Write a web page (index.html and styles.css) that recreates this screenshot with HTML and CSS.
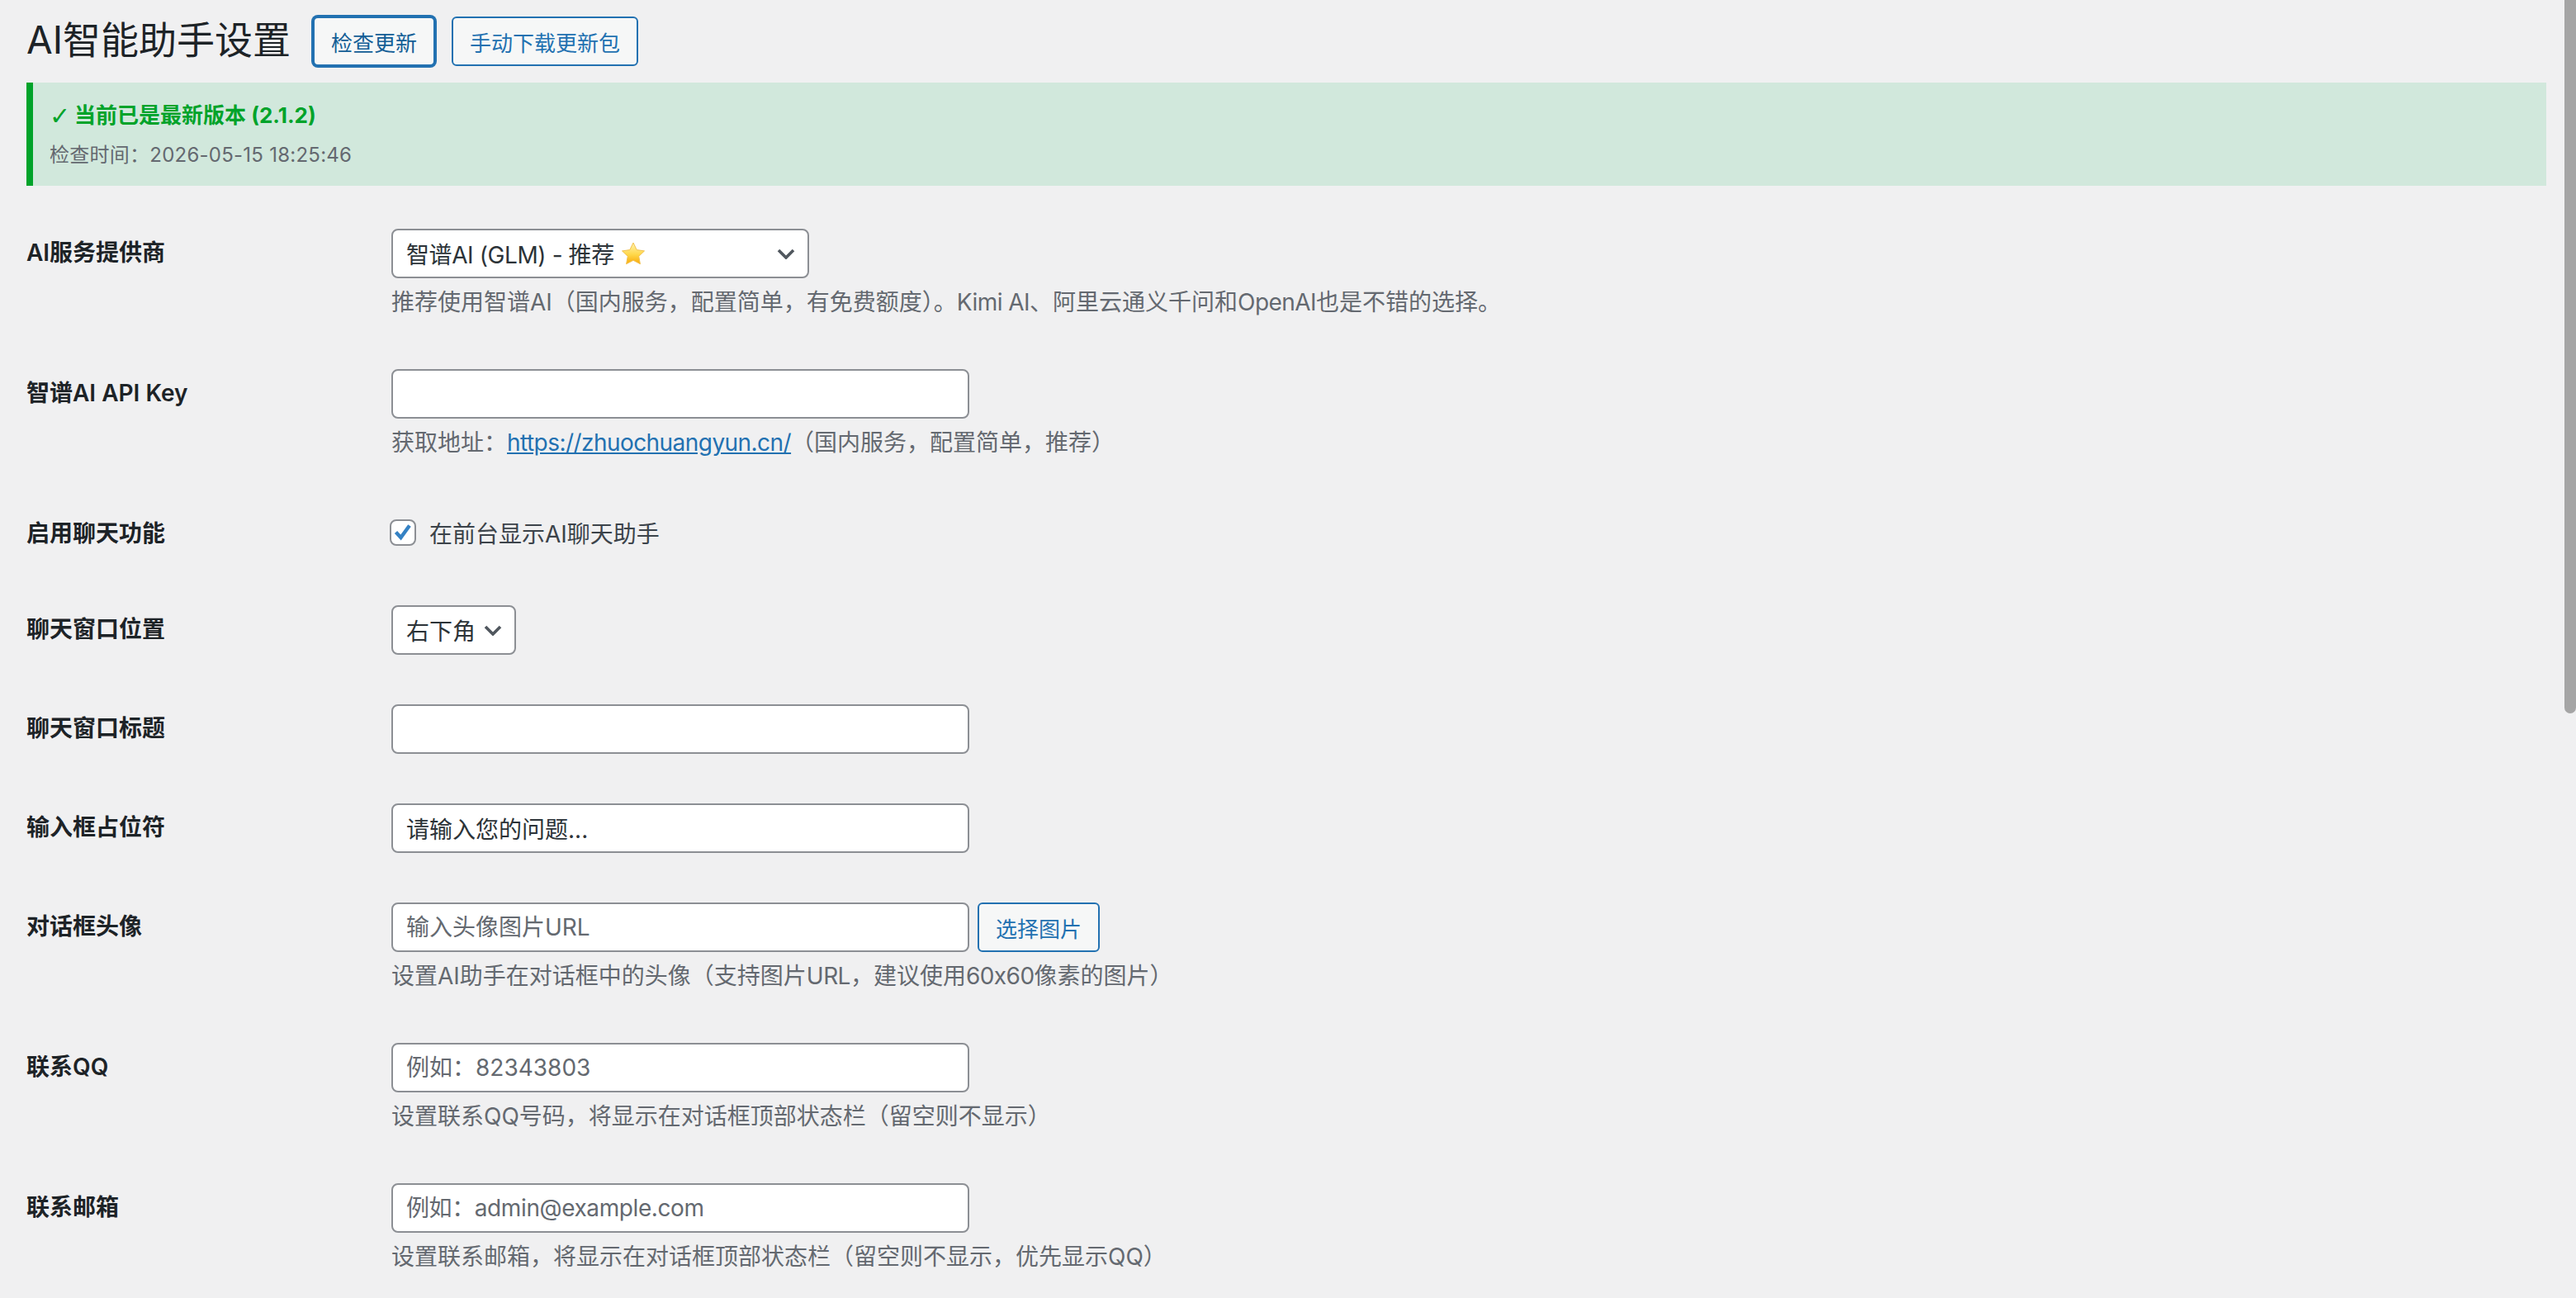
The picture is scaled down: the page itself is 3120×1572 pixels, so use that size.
FILE: index.html
```html
<!DOCTYPE html>
<html lang="zh-CN">
<head>
    <meta charset="UTF-8">
    <title>AI智能助手设置</title>
    <link rel="stylesheet" href="styles.css">
</head>
<body>
    <div class="wrap">
        <div class="page-header">
            <h1>AI智能助手设置</h1>
            <button class="button button-focus" type="button">检查更新</button>
            <button class="button" type="button">手动下载更新包</button>
        </div>

        <div class="notice">
            <p class="notice-title"><span class="tick">✓</span>当前已是最新版本 (2.1.2)</p>
            <p class="notice-time">检查时间：2026-05-15 18:25:46</p>
        </div>

        <table class="form-table">
            <tr>
                <th>AI服务提供商</th>
                <td>
                    <div class="select select-wide">
                        <span class="select-text">智谱AI (GLM) - 推荐</span>
                        <svg class="star" viewBox="0 0 30 28">
                            <defs>
                                <linearGradient id="star-fill" x1="0" y1="0" x2="0" y2="1">
                                    <stop offset="0" stop-color="#fff3b0"/>
                                    <stop offset="0.55" stop-color="#ffd84a"/>
                                    <stop offset="1" stop-color="#f9a908"/>
                                </linearGradient>
                            </defs>
                            <path d="M15 1l4.2 8.6 9.3 1.3-6.8 6.5 1.7 9.3L15 22.3l-8.4 4.4 1.7-9.3-6.8-6.5 9.3-1.3z" fill="url(#star-fill)" stroke="#f2c14e" stroke-width="1" stroke-linejoin="round"/>
                        </svg>
                        <svg class="chevron" viewBox="0 0 22 13"><path d="M2 2l9 9 9-9" fill="none" stroke="#50575e" stroke-width="3.6"/></svg>
                    </div>
                    <p class="description">推荐使用智谱AI（国内服务，配置简单，有免费额度）。<span class="latin">Kimi AI</span>、阿里云通义千问和<span class="latin">OpenAI</span>也是不错的选择。</p>
                </td>
            </tr>
            <tr>
                <th>智谱AI API Key</th>
                <td>
                    <input class="text-input" type="text">
                    <p class="description">获取地址：<a class="latin" href="#">https://zhuochuangyun.cn/</a>（国内服务，配置简单，推荐）</p>
                </td>
            </tr>
            <tr>
                <th>启用聊天功能</th>
                <td>
                    <label class="check-label">
                        <span class="checkbox">
                            <svg viewBox="0 0 32 32"><path d="M7.5 15.5l6 6.5L24 7.5" fill="none" stroke="#3582c4" stroke-width="4.4"/></svg>
                        </span>
                        在前台显示AI聊天助手
                    </label>
                </td>
            </tr>
            <tr>
                <th>聊天窗口位置</th>
                <td>
                    <div class="select select-small">
                        <span>右下角</span>
                        <svg class="chevron" viewBox="0 0 22 13"><path d="M2 2l9 9 9-9" fill="none" stroke="#50575e" stroke-width="3.6"/></svg>
                    </div>
                </td>
            </tr>
            <tr>
                <th>聊天窗口标题</th>
                <td><input class="text-input" type="text"></td>
            </tr>
            <tr>
                <th>输入框占位符</th>
                <td><input class="text-input" type="text" value="请输入您的问题..."></td>
            </tr>
            <tr>
                <th>对话框头像</th>
                <td>
                    <div class="input-row">
                        <input class="text-input" type="text" placeholder="输入头像图片URL">
                        <button class="button" type="button">选择图片</button>
                    </div>
                    <p class="description">设置AI助手在对话框中的头像（支持图片<span class="latin">URL</span>，建议使用<span class="latin">60x60</span>像素的图片）</p>
                </td>
            </tr>
            <tr>
                <th>联系QQ</th>
                <td>
                    <input class="text-input" type="text" placeholder="例如：82343803">
                    <p class="description">设置联系QQ号码，将显示在对话框顶部状态栏（留空则不显示）</p>
                </td>
            </tr>
            <tr>
                <th>联系邮箱</th>
                <td>
                    <input class="text-input input-email" type="text" placeholder="例如：admin@example.com">
                    <p class="description">设置联系邮箱，将显示在对话框顶部状态栏（留空则不显示，优先显示QQ）</p>
                </td>
            </tr>
        </table>
    </div>

    <div class="scrollbar-thumb"></div>
</body>
</html>
```

FILE: styles.css
```css
* {
    margin: 0;
    padding: 0;
    box-sizing: border-box;
}

html, body {
    height: 100%;
    overflow: hidden;
}

body {
    background-color: #f0f0f1;
    font-family: "Inter", "Noto Sans CJK SC", sans-serif;
    color: #3c434a;
}

.wrap {
    padding: 20px 36px 0 32px;
}

.page-header {
    display: flex;
    align-items: center;
    height: 60px;
    margin-bottom: 20px;
}

h1 {
    font-size: 46px;
    font-weight: 400;
    line-height: 56px;
    color: #1d2327;
    margin-right: 27px;
    margin-top: -4px;
}

.button {
    height: 60px;
    padding: 0 20px;
    background-color: #f6f7f7;
    border: 2px solid #2271b1;
    border-radius: 6px;
    color: #2271b1;
    font-family: inherit;
    font-size: 26px;
    margin-right: 20px;
    flex-shrink: 0;
}

.button-focus {
    color: #135e96;
    box-shadow: 0 0 0 2px #2271b1;
}

.notice {
    height: 125px;
    padding: 20px 20px 0 20px;
    background-color: #d1e8dc;
    border-left: 8px solid #00a32a;
}

.notice-title {
    font-size: 26px;
    font-weight: 700;
    line-height: 40px;
    color: #00a32a;
}

.tick {
    display: inline-block;
    width: 30px;
    font-family: "DejaVu Sans", sans-serif;
    font-size: 30px;
    font-weight: 700;
    line-height: 30px;
    vertical-align: -2px;
}

.notice-time {
    margin-top: 8px;
    font-size: 24px;
    line-height: 40px;
    letter-spacing: 0.25px;
    color: #646970;
}

.form-table {
    width: 100%;
    margin-top: 22px;
    border-collapse: collapse;
}

.form-table th {
    width: 442px;
    padding: 41px 0 39px;
    font-size: 28px;
    font-weight: 600;
    line-height: 36px;
    color: #1d2327;
    text-align: left;
    vertical-align: top;
}

.form-table td {
    padding: 30px 0;
    vertical-align: top;
}

.select {
    display: flex;
    align-items: center;
    height: 60px;
    padding: 0 15px 0 16px;
    background-color: #fff;
    border: 2px solid #8c8f94;
    border-radius: 8px;
    font-size: 28px;
    color: #2c3338;
}

.select-wide {
    width: 506px;
}

.select-small {
    width: 151px;
}

.select-text {
    letter-spacing: -0.4px;
}

.star {
    width: 30px;
    height: 28px;
    margin-left: 8px;
}

.chevron {
    width: 22px;
    height: 13px;
    margin-left: auto;
}

.text-input {
    display: block;
    width: 700px;
    height: 60px;
    padding: 0 16px;
    background-color: #fff;
    border: 2px solid #8c8f94;
    border-radius: 8px;
    font-family: inherit;
    font-size: 28px;
    color: #2c3338;
}

.text-input::placeholder {
    color: #646970;
    opacity: 1;
}

.input-email::placeholder {
    letter-spacing: -0.4px;
}

.input-row {
    display: flex;
    gap: 10px;
}

.description {
    margin-top: 8px;
    font-size: 28px;
    line-height: 42px;
    color: #646970;
}

.description a {
    color: #2271b1;
}

.latin {
    letter-spacing: -0.55px;
}

.check-label {
    display: flex;
    align-items: center;
    gap: 16px;
    height: 56px;
    font-size: 28px;
    color: #3c434a;
}

.checkbox {
    width: 32px;
    height: 32px;
    background-color: #fff;
    border: 2px solid #8c8f94;
    border-radius: 8px;
    margin-left: -2px;
}

.checkbox svg {
    display: block;
    width: 32px;
    height: 32px;
    margin: -2px;
}

.scrollbar-thumb {
    position: fixed;
    top: 0;
    right: 0;
    width: 14px;
    height: 864px;
    background-color: #a5a5a5;
    border-radius: 0 0 7px 7px;
}
```
